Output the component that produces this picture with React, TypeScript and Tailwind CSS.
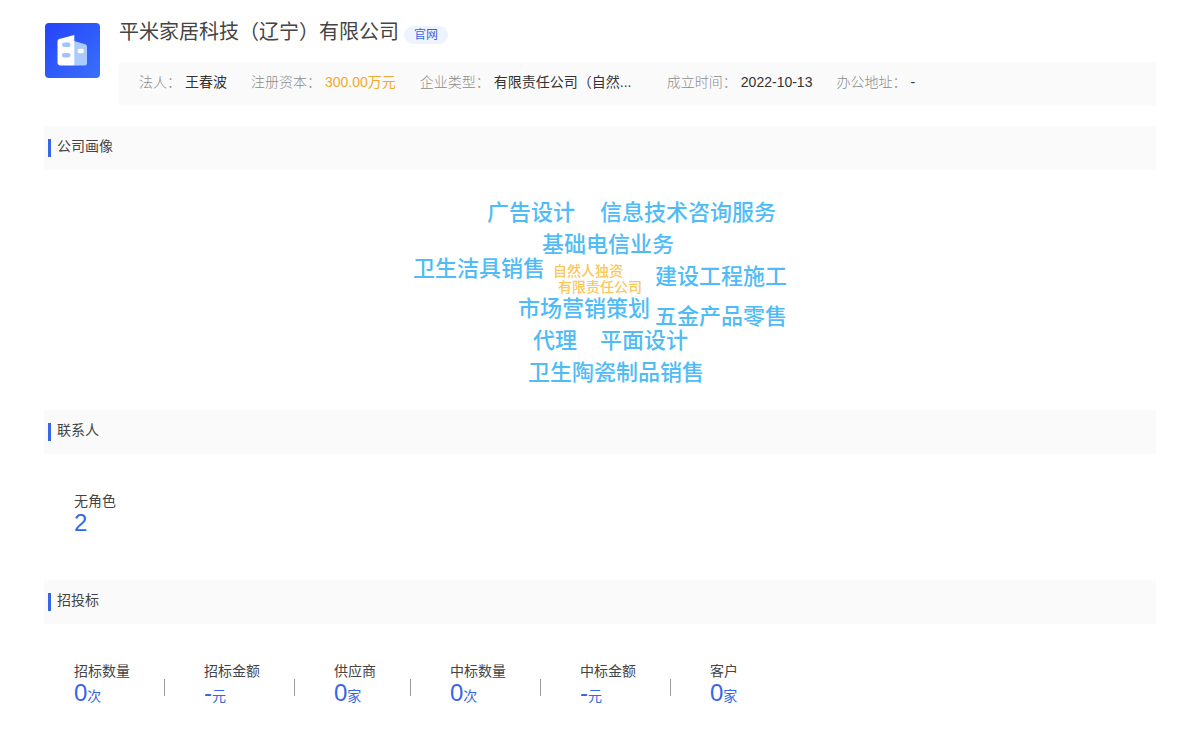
import type { ReactNode } from 'react';

type Tone = 'dark' | 'gold';

const company = {
  name: '平米家居科技（辽宁）有限公司',
  website: '#',
};

const facts: { label: string; value: string; tone?: Tone; wide?: boolean }[] = [
  { label: '法人：', value: '王春波' },
  { label: '注册资本：', value: '300.00万元', tone: 'gold' },
  { label: '企业类型：', value: '有限责任公司（自然...', wide: true },
  { label: '成立时间：', value: '2022-10-13' },
  { label: '办公地址：', value: '-' },
];

// Positions are relative to the 400px wide cloud canvas.
const cloudWords = [
  { text: '广告设计', x: 87, y: 27 },
  { text: '信息技术咨询服务', x: 200, y: 27 },
  { text: '基础电信业务', x: 142, y: 59 },
  { text: '卫生洁具销售', x: 13, y: 83 },
  { text: '建设工程施工', x: 255, y: 91 },
  { text: '市场营销策划', x: 118, y: 123 },
  { text: '五金产品零售', x: 255, y: 131 },
  { text: '代理', x: 133, y: 155 },
  { text: '平面设计', x: 200, y: 155 },
  { text: '卫生陶瓷制品销售', x: 128, y: 187 },
  { text: '自然人独资', x: 153, y: 89, small: true },
  { text: '有限责任公司', x: 158, y: 105, small: true },
];

const contacts = [{ label: '无角色', value: '2', unit: '' }];

const bids = [
  { label: '招标数量', value: '0', unit: '次' },
  { label: '招标金额', value: '-', unit: '元' },
  { label: '供应商', value: '0', unit: '家' },
  { label: '中标数量', value: '0', unit: '次' },
  { label: '中标金额', value: '-', unit: '元' },
  { label: '客户', value: '0', unit: '家' },
];

function CompanyLogo() {
  return (
    <svg viewBox="0 0 55 55" className="size-[55px] shrink-0" aria-hidden="true">
      <defs>
        <linearGradient id="logo-bg" x1="0" y1="0" x2="1" y2="1">
          <stop offset="0" stopColor="#2344fb" />
          <stop offset="1" stopColor="#3a70fb" />
        </linearGradient>
      </defs>
      <rect width="55" height="55" rx="4" fill="url(#logo-bg)" />
      <path d="M29 18 40.300 21.200Q42 21.800 42 23.600V40Q42 42.500 39.500 42.500H29Z" fill="#a9cbfd" />
      <path d="M14.200 16 29.300 12V42.500H15.500Q12.500 42.500 12.500 39.500V18Q12.500 16.500 14.200 16Z" fill="#fff" />
      <rect x="17" y="19.500" width="8.500" height="4.500" rx="2.200" fill="#a3c2fb" />
      <rect x="17" y="30" width="8.500" height="4.500" rx="2.200" fill="#a3c2fb" />
      <rect x="32.500" y="25.800" width="6.500" height="4.400" rx="2.200" fill="#fff" />
    </svg>
  );
}

function Section({ title, children }: { title: string; children: ReactNode }) {
  return (
    <section>
      <div className="flex h-11 items-start gap-1.5 bg-[#fafafa] pt-2.5 pl-1">
        <span className="mt-[3px] h-[18px] w-[3px] bg-[#3566e8]" />
        <h2 className="text-sm leading-5">{title}</h2>
      </div>
      {children}
    </section>
  );
}

function StatRow({ items }: { items: typeof bids }) {
  return (
    <dl className="flex flex-wrap px-[30px] pt-[37px]">
      {items.map((item, index) => (
        <div key={item.label} className="flex">
          {index > 0 && <span className="mt-[18px] mr-[39px] ml-[34px] h-[17px] w-px bg-[#999]" />}
          <div>
            <dt className="text-sm leading-5">{item.label}</dt>
            <dd className="text-2xl leading-6 text-[#3566e8]">
              {item.value}
              <span className="text-sm leading-6">{item.unit}</span>
            </dd>
          </div>
        </div>
      ))}
    </dl>
  );
}

export default function App() {
  return (
    <main
      lang="zh-CN"
      className="bg-white px-11 pt-[18px] pb-12 font-['Liberation_Sans','Noto_Sans_CJK_SC',sans-serif] text-[#444]"
    >
      <header className="flex gap-[19px] pl-px">
        <div className="pt-[5px]">
          <CompanyLogo />
        </div>
        <div className="min-w-0 flex-1">
          <div className="flex items-start gap-[5px]">
            <h1 className="text-xl leading-7">{company.name}</h1>
            <a
              href={company.website}
              className="mt-2 rounded-full bg-[#edf4fe] px-2.5 text-xs leading-[18px] text-[#3566e8]"
            >
              官网
            </a>
          </div>
          <dl className="mt-4 flex min-h-[43px] flex-wrap gap-x-6 bg-[#fafafa] px-5 pt-2.5 pb-3 text-sm leading-5">
            {facts.map((fact) => (
              <div key={fact.label} className="flex gap-1">
                <dt className="font-light text-[#8c8c8c]">{fact.label}</dt>
                <dd
                  className={`${fact.tone === 'gold' ? 'text-[#f0a830]' : 'text-[#333]'} ${fact.wide ? 'min-w-[149px]' : ''}`}
                >
                  {fact.value}
                </dd>
              </div>
            ))}
          </dl>
        </div>
      </header>

      <div className="mt-[21px]">
        <Section title="公司画像">
          <div className="relative mx-auto h-60 w-[400px]">
            {cloudWords.map((word) => (
              <span
                key={word.text}
                className={
                  word.small
                    ? 'absolute text-sm leading-6 font-medium whitespace-nowrap text-[#fac858]'
                    : 'absolute text-[22px] leading-8 font-medium whitespace-nowrap text-[#4fbcf7]'
                }
                style={{ left: word.x, top: word.y }}
              >
                {word.text}
              </span>
            ))}
          </div>
        </Section>

        <Section title="联系人">
          <div className="min-h-[126px]">
            <StatRow items={contacts} />
          </div>
        </Section>

        <Section title="招投标">
          <StatRow items={bids} />
        </Section>
      </div>
    </main>
  );
}
